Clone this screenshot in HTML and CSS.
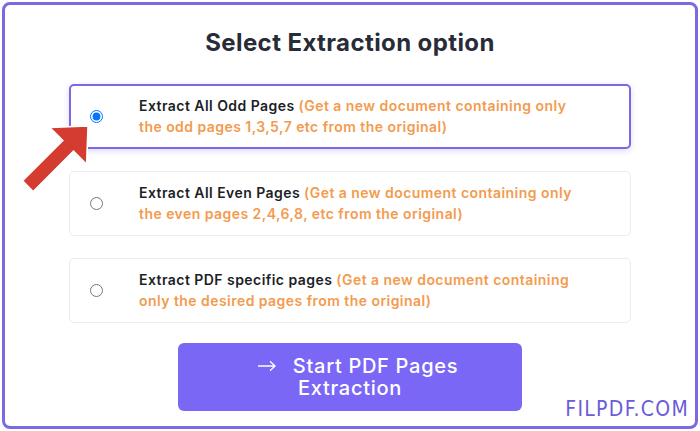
FILE: index.html
```html
<!DOCTYPE html>
<html lang="en">
<head>
<meta charset="utf-8">
<title>Select Extraction option</title>
<link rel="stylesheet" href="styles.css">
</head>
<body>
<div class="frame">
  <h1 class="title">Select Extraction option</h1>
  <div class="options">
    <label class="opt active">
      <input type="radio" name="mode" checked>
      <span class="txt"><b>Extract All Odd Pages</b> <em>(Get a new document containing only<br>the odd pages 1,3,5,7 etc from the original)</em></span>
    </label>
    <label class="opt">
      <input type="radio" name="mode">
      <span class="txt"><b>Extract All Even Pages</b> <em>(Get a new document containing only<br>the even pages 2,4,6,8, etc from the original)</em></span>
    </label>
    <label class="opt">
      <input type="radio" name="mode">
      <span class="txt"><b>Extract PDF specific pages</b> <em>(Get a new document containing<br>only the desired pages from the original)</em></span>
    </label>
  </div>
  <button class="start" type="button"><svg class="arr" width="18" height="10" viewBox="0 0 18 10" aria-hidden="true"><path d="M0.5 5H17M12.5 0.8L17 5L12.5 9.2" fill="none" stroke="#ffffff" stroke-width="1.3" stroke-linecap="round" stroke-linejoin="round"/></svg>Start PDF Pages<br>Extraction</button>
  <svg class="pointer" width="100" height="100" viewBox="10 100 100 100" aria-hidden="true">
    <polygon points="0,0 -28,-26 -28,-7.5 -85,-7.5 -85,7.5 -28,7.5 -28,26" transform="translate(88,126) rotate(-45)" fill="#d33c2e" stroke="#ffffff" stroke-width="1.5" stroke-linejoin="miter"/>
  </svg>
  <div class="mark">FILPDF.COM</div>
</div>
</body>
</html>
```
FILE: styles.css
```css
html, body {
  margin: 0;
  padding: 0;
  background: #ffffff;
}
body {
  font-family: Inter, "Noto Sans", sans-serif;
}
.frame {
  position: relative;
  box-sizing: border-box;
  margin: 2px 0 0 2px;
  width: 696px;
  height: 427px;
  border: 3px solid #7b6ae2;
  border-radius: 8px;
  padding-top: 23px;
  display: flex;
  flex-direction: column;
  align-items: center;
}
.title {
  margin: 0;
  font-size: 24px;
  line-height: 30px;
  font-weight: 700;
  color: #272c37;
  letter-spacing: 0.4px;
}
.options {
  margin-top: 26px;
  width: 562px;
  display: flex;
  flex-direction: column;
  gap: 22px;
}
.opt {
  display: flex;
  align-items: center;
  border: 1px solid #ebebf7;
  border-radius: 5px;
  padding: 10px 20px 11px;
  background: #fff;
}
.opt.active {
  border: 2px solid #7a68e4;
  padding: 9px 19px 10px;
  box-shadow: 0 2px 6px rgba(123, 106, 226, 0.25);
}
.opt input {
  margin: 0 36px 0 0;
  width: 13px;
  height: 13px;
  flex: none;
}
.txt {
  font-size: 14px;
  line-height: 21px;
  font-weight: 600;
  letter-spacing: 0.45px;
  color: #1c1f27;
}
.txt b {
  font-weight: 600;
}
.txt em {
  font-style: normal;
  color: #f39b4e;
}
.start {
  margin-top: 20px;
  width: 344px;
  height: 68px;
  border: none;
  border-radius: 6px;
  background: #7a67f6;
  color: #ffffff;
  font-family: Inter, "Noto Sans", sans-serif;
  font-size: 20px;
  font-weight: 500;
  line-height: 22px;
  letter-spacing: 0.7px;
  text-align: center;
  padding: 0;
}
.arr {
  margin-left: 16px;
  margin-right: 17px;
  vertical-align: 2px;
}
.pointer {
  position: absolute;
  left: 5px;
  top: 95px;
}
.mark {
  position: absolute;
  right: 6px;
  bottom: 7px;
  font-family: "DejaVu Sans Condensed", "DejaVu Sans", sans-serif;
  font-size: 21px;
  line-height: 20px;
  letter-spacing: 1.3px;
  color: #6b5cd8;
}
```
